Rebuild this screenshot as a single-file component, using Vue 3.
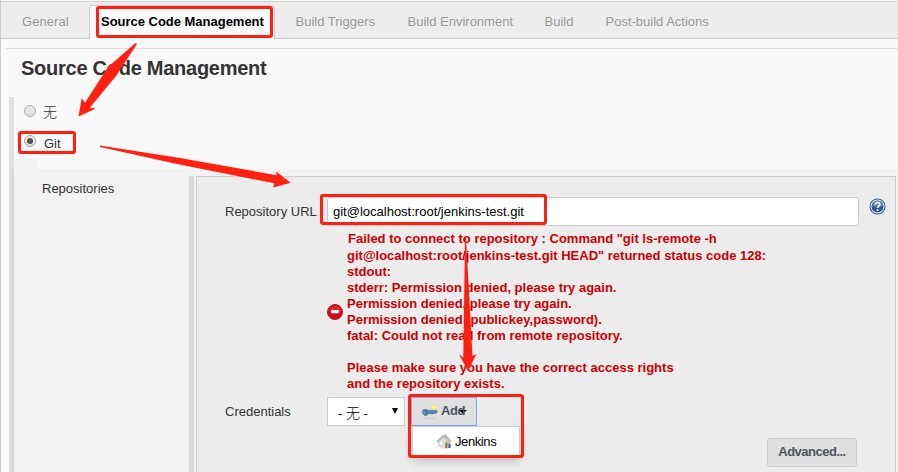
<script setup>
import { ref } from 'vue'

const tabs = [
  { label: 'General', cls: 'general' },
  { label: 'Source Code Management', cls: 'active' },
  { label: 'Build Triggers', cls: 'triggers' },
  { label: 'Build Environment', cls: 'environment' },
  { label: 'Build', cls: 'build' },
  { label: 'Post-build Actions', cls: 'post' },
]
const scm = ref('git')
const url = ref('git@localhost:root/jenkins-test.git')
const errorLines = [
  'Failed to connect to repository : Command "git ls-remote -h',
  'git@localhost:root/jenkins-test.git HEAD" returned status code 128:',
  'stdout:',
  'stderr: Permission denied, please try again.',
  'Permission denied, please try again.',
  'Permission denied (publickey,password).',
  'fatal: Could not read from remote repository.',
  '',
  'Please make sure you have the correct access rights',
  'and the repository exists.',
]
</script>

<template>
  <div class="page">
    <nav class="tabs">
      <a v-for="t in tabs" :key="t.label" class="tab" :class="t.cls"><span>{{ t.label }}</span></a>
    </nav>
    <hr class="rule" />
    <h1 class="title">Source Code Management</h1>

    <section class="scm">
      <div class="choices">
        <label class="choice"><i class="radio" :class="{ on: scm === 'none' }"></i><span class="cjk">无</span></label>
        <label class="choice git"><i class="radio" :class="{ on: scm === 'git' }"></i><span>Git</span></label>
      </div>
      <div class="notch"></div>
      <div class="details">
        <div class="side">Repositories</div>
        <div class="panel">
          <div class="row url-row">
            <span class="name url-name">Repository URL</span>
            <input v-model="url" class="url" type="text" spellcheck="false" />
            <svg class="help" width="17" height="17" viewBox="0 0 17 17">
              <circle cx="8.5" cy="8.5" r="7.5" fill="#e9f0f8" stroke="#3c5f95" stroke-width="1.1" />
              <circle cx="8.5" cy="8.5" r="6" fill="#2f5490" />
              <path d="M3 8a5.5 5.5 0 0 1 11 0Q8.5 10 3 8Z" fill="#7d9cc6" opacity=".65" />
              <path d="M6.3 6.7C6.3 3.8 10.8 3.8 10.8 6.5C10.8 8.1 8.6 8.3 8.6 10" fill="none" stroke="#fff" stroke-width="1.6" />
              <circle cx="8.6" cy="12" r="1" fill="#fff" />
            </svg>
          </div>

          <div class="error">
            <svg class="stop" width="16" height="16" viewBox="0 0 16 16">
              <circle cx="8" cy="8" r="7.5" fill="#d40b16" stroke="#af1520" />
              <path d="M2 7a6 5.5 0 0 1 12 0Q8 9 2 7Z" fill="#ed4850" opacity=".4" />
              <rect x="4" y="6" width="8" height="3.2" rx=".6" fill="#fff" />
            </svg>
            <div class="message">
              <div v-for="(line, i) in errorLines" :key="i" class="line">{{ line }}</div>
            </div>
          </div>

          <div class="row cred-row">
            <span class="name cred-name">Credentials</span>
            <div class="select"><span>- <b>无</b> -</span><i class="caret"></i></div>
            <div class="adder">
              <button class="add">
                <svg width="16" height="16" viewBox="0 0 16 16">
                  <ellipse cx="8" cy="14.2" rx="6" ry=".8" fill="#ccc" />
                  <circle cx="12" cy="3.6" r="2.6" fill="#f5e957" />
                  <path d="M12 1v5M9.5 3.6h5" stroke="#fffbb0" stroke-width="1" />
                  <path d="M1 6.1Q3.5 4.3 6.2 6.4L14.5 6.3L15.5 7.8L14 9.6H12.8L12 9L11 10L6.8 9.6Q5 12.2 2.2 11.2Q-.6 9.5 1 6.1Z" fill="#4f7cb2" stroke="#416b9c" stroke-width=".6" />
                  <path d="M6 7.3h8" stroke="#6f98c8" stroke-width=".7" />
                  <circle cx="2.2" cy="8.8" r=".7" fill="#b8cce0" />
                </svg>
                <span>Add</span><i class="drop"></i>
              </button>
              <div class="menu">
                <svg width="16" height="16" viewBox="0 0 16 16">
                  <path d="M2.5 7.5V13l4.5 2.3L13 14V7L7 3Z" fill="#dedfde" stroke="#c2c4c2" stroke-width=".6" />
                  <path d="M.5 8.4L7 2L9.5 1.4L15.5 8.2L13.6 8.6L7.8 4L2 9.2Z" fill="#bcbebd" stroke="#a8aaa9" stroke-width=".5" />
                  <path d="M4 9h2v3H4z" fill="#f6f6f6" />
                  <circle cx="10.5" cy="9" r="1.1" fill="#c29a6b" />
                  <path d="M9.2 10.2h2.6v3.4H9.2z" fill="#4e9a43" />
                  <circle cx="13.3" cy="10" r="1.1" fill="#d3a063" />
                  <path d="M12.1 11.2h2.6V15h-2.6z" fill="#426fbd" />
                  <path d="M9.4 13h2v2.3h-2z" fill="#d75142" />
                  <path d="M11.2 12h1.2v2h-1.2z" fill="#e9bf40" />
                </svg>
                <span>Jenkins</span>
              </div>
            </div>
          </div>
          <div class="actions"><button class="advanced"><span>Advanced...</span></button></div>
        </div>
      </div>
    </section>

    <svg class="marks" width="898" height="472" viewBox="0 0 898 472">
      <g fill="none" stroke="#ff2012" stroke-width="3">
        <rect x="97.5" y="7.5" width="174" height="29" rx="1.5" />
        <rect x="19.5" y="132.5" width="55" height="20" rx="1.5" />
        <rect x="321.5" y="195.5" width="224" height="28" rx="1.5" />
        <rect x="409.5" y="395.5" width="113" height="61" rx="1.5" />
      </g>
      <g fill="#ff2012">
        <path d="M135.5 43L137 44L116 76L90 107.5L95.5 108.7L78.5 116.5L81.7 98.3L85 102.7L108 67Z" />
        <path d="M100 145.5L180 158L276.7 175.3L276 171.5L290.7 182.7L273.3 187.5L274.3 183.3L177 164L100 147Z" />
        <path d="M465 238H466L472.5 356L476.5 354L468 371L459 354.3L463.3 357.5Z" />
      </g>
    </svg>
  </div>
</template>

<style>
body { background: #f9f9f9; }
</style>

<style scoped>
* { box-sizing: border-box; }
.page {
  position: relative; width: 898px; height: 472px; padding-top: 1px; overflow: hidden;
  background: #f9f9f9; color: #333; font: 13px/16px "Liberation Sans", Arial, "Noto Sans CJK SC", sans-serif;
  border-left: 1px solid #ccc;
}
span { white-space: nowrap; }
button { font: inherit; margin: 0; padding: 0; }
.tabs {
  display: flex; align-items: flex-end; height: 38px; background: #ededed;
  border-top: 1px solid #d3d5cb; border-bottom: 1px solid #ccc;
}
.tab { display: flex; align-items: center; height: 33px; color: #999; padding-top: 1px; }
.general { width: 88px; padding-left: 21px; letter-spacing: .05px; }
.active {
  width: 186px; padding-left: 11px; height: 34px; margin-bottom: -1px; color: #000; font-weight: bold;
  background: #f9f9f9; border: 1px solid #ccc; border-bottom: 0; border-radius: 4px 4px 0 0; padding-bottom: 2px; padding-top: 0;
  letter-spacing: -.02px;
}
.triggers { width: 112px; margin-left: 20.5px; }
.environment { width: 137px; }
.build { width: 61px; }
.rule { height: 1px; margin: 9px 0 0 5px; border: 0; background: #ddd; }
.title { margin: 7px 0 0 20px; font-size: 20px; line-height: 24px; font-weight: bold; letter-spacing: -.26px; }
.scm { margin: 17px 0 0 8px; border-left: 5px solid #e0e0e0; }
.choices { height: 62px; padding: 0 0 0 10px; }
.choice { display: flex; align-items: center; height: 28px; gap: 8px; }
.choice.git { height: 34px; }
.choice > span { padding-top: 4px; }
.choice > .cjk { margin-left: -1px; font-size: 14px; font-weight: 300; padding-top: 2px; }
.radio {
  width: 12px; height: 12px; border: 1px solid #aaa; border-radius: 50%;
  background: linear-gradient(#eee, #ddd); display: flex; align-items: center; justify-content: center;
}
.git .radio { margin-bottom: 2px; }
.radio.on::after { content: ""; width: 6px; height: 6px; border-radius: 50%; background: #555; }
.notch { width: 23px; height: 10px; background: #f2f2f2; }
.details { display: flex; height: 310px; padding-top: 7px; background: #f2f2f2; box-shadow: -3px 0 #d8d8d8; }
.side { width: 180px; height: 303px; padding: 5px 0 0 28px; border-right: 5px solid #d8d8d8; }
.panel { width: 700px; height: 303px; margin-left: 2px; padding: 20px 0 0 28px; background: #ececec; border: 1px solid #ccc; }
.row { display: flex; align-items: flex-start; }
.name { width: 102px; padding-top: 7px; }
.url {
  width: 532px; height: 29px; padding: 0 5px; border: 1px solid #ccc; border-radius: 3px; outline: 0;
  background: #fff; color: #000; font: 13px "Liberation Sans", Arial, sans-serif;
}
.help { margin: 1px 0 0 9.5px; flex: none; }
.error { display: flex; align-items: center; margin: 4px 0 0 102px; height: 162px; gap: 4px; color: #c00; font-weight: bold; }
.stop { margin-top: 2px; }
.message { white-space: nowrap; }
.line { height: 16px; }
.line:first-child { height: 17px; padding-left: 1px; }
.cred-row { margin-top: 5px; }
.select {
  display: flex; justify-content: space-between; align-items: center; width: 78px; height: 29px;
  padding: 0 6px 0 10px; background: #fff; border: 1px solid #ccc; color: #000;
}
.select span { padding-top: 3px; }
.select b { font-weight: 300; font-size: 14px; }
.caret { border: 3px solid transparent; border-top: 6px solid #000; border-bottom: 0; margin-bottom: 2px; }
.adder { position: relative; margin-left: 6px; }
.add {
  display: flex; align-items: center; width: 66px; height: 29px; padding-left: 10px; gap: 3px;
  background: #e0e0e0; border: 1px solid #84a9ed; color: #4d545d; font-weight: bold; letter-spacing: -.4px;
}
.add span, .advanced span { position: relative; top: -1px; }
.drop { margin-left: -9px; border: 4px solid transparent; border-top: 4px solid #000; border-bottom: 0; }
.menu {
  position: absolute; left: 1px; top: 29px; width: 108px; height: 30px; display: flex; align-items: center;
  padding-left: 23px; gap: 3px; color: #000; background: #fff; border: 1px solid #ccc; box-shadow: 0 5px 9px #0003;
  letter-spacing: -.4px;
}
.menu span { padding-top: 2px; }
.actions { display: flex; justify-content: flex-end; padding: 12px 38px 0 0; }
.advanced {
  width: 90px; height: 29px; background: #e0e0e0; border: 1px solid #ccc; border-radius: 3px;
  color: #4d545d; font-weight: bold; letter-spacing: -.5px;
}
.marks { position: absolute; left: -1px; top: 0; pointer-events: none; }
</style>
